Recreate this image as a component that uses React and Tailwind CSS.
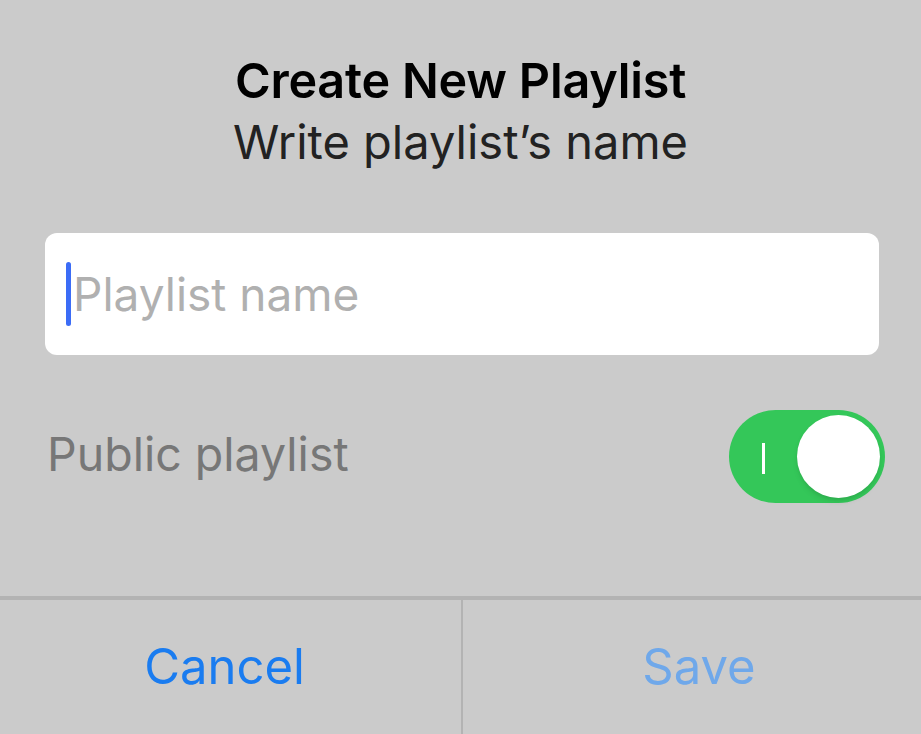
import React, { useState } from 'react';

const App = () => {
    const [isPublic, setIsPublic] = useState(true);

    return (
        <div
            className="w-[921px] h-[734px] bg-[#cbcbcb] flex flex-col overflow-hidden"
            style={{ fontFamily: 'Inter, "Liberation Sans", sans-serif' }}
        >
            {/* header */}
            <div className="flex flex-col items-center pt-[50px]">
                <h1 className="text-[48.5px] leading-[62px] font-semibold text-black tracking-[-0.2px]">
                    Create New Playlist
                </h1>
                <p className="text-[47px] leading-[60px] text-[#222]">
                    Write playlist’s name
                </p>
            </div>

            {/* input */}
            <div className="pl-[45px] pr-[42px] mt-[61px]">
                <div className="h-[122px] bg-white rounded-[12px] flex items-center pl-[21px]">
                    <span className="w-[5px] h-[64px] rounded-full bg-[#3b6cf6]" />
                    <span className="text-[46px] text-[#b0b0b0] ml-[2px]">Playlist name</span>
                </div>
            </div>

            {/* switch row */}
            <div className="flex items-center justify-between pl-[47px] pr-[36px] mt-[55px]">
                <span className="text-[46.5px] text-[#777] -mt-[4px]">Public playlist</span>
                <button
                    onClick={() => setIsPublic(!isPublic)}
                    className={`relative w-[156px] h-[93px] rounded-full ${isPublic ? 'bg-[#34c759]' : 'bg-[#e5e5e5]'}`}
                >
                    <span className="absolute left-[33px] top-[33px] w-[3px] h-[31px] bg-white" />
                    <span
                        className={`absolute top-[5px] w-[83px] h-[83px] rounded-full bg-white shadow-md ${isPublic ? 'left-[68px]' : 'left-[5px]'}`}
                    />
                </button>
            </div>

            {/* actions */}
            <div className="mt-auto border-t-4 border-[#b3b3b3] h-[138px] flex">
                <button className="w-[463px] shrink-0 flex items-center justify-center pr-[12px] text-[49px] text-[#1a7cf0] border-r-2 border-[#b3b3b3]">
                    Cancel
                </button>
                <button className="flex-1 flex items-center justify-center pl-[14px] text-[49px] text-[#6fa8ea]">
                    Save
                </button>
            </div>
        </div>
    );
};

export default App;
